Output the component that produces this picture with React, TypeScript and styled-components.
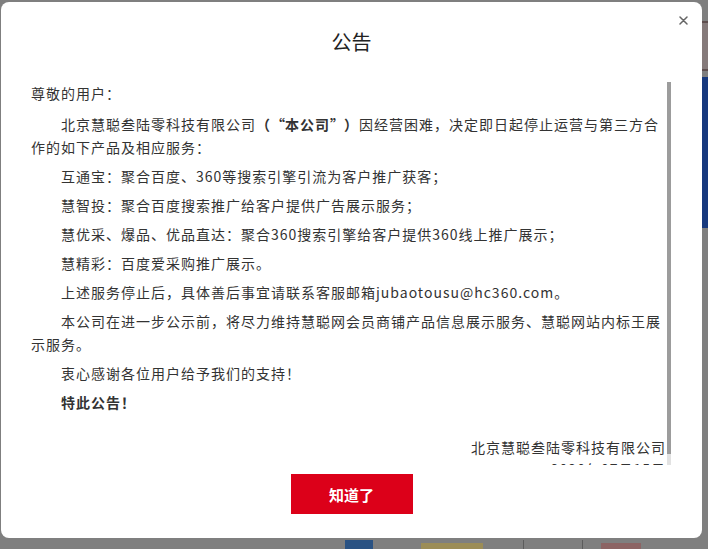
import React from 'react'
import styled, { createGlobalStyle } from 'styled-components'

const GlobalStyle = createGlobalStyle`
  html, body {
    margin: 0;
    padding: 0;
    width: 100%;
    height: 100%;
    overflow: hidden;
  }
  body {
    font-family: "Noto Sans CJK SC", "Noto Sans", sans-serif;
    color: #333;
  }
`

const Page = styled.div`
  position: relative;
  width: 100vw;
  height: 100vh;
  background: #7f7f7f;
  overflow: hidden;
`

/* dimmed page content peeking out behind the overlay */
const RightStrip = styled.div`
  position: absolute;
  top: 0;
  right: 0;
  width: 6px;
  display: flex;
  flex-direction: column;
  padding-top: 21px;
`

const Band = styled.div<{ $h: number; $bg: string; $gap?: number }>`
  height: ${({ $h }) => $h}px;
  margin-bottom: ${({ $gap = 0 }) => $gap}px;
  background: ${({ $bg }) => $bg};
`

const BottomStrip = styled.div`
  position: absolute;
  left: 0;
  right: 0;
  bottom: 0;
  height: 9px;
  display: flex;
  align-items: flex-end;
  padding-left: 345px;
  gap: 0;
`

const Piece = styled.div<{ $w: number; $h: number; $bg: string; $ml?: number }>`
  width: ${({ $w }) => $w}px;
  height: ${({ $h }) => $h}px;
  margin-left: ${({ $ml = 0 }) => $ml}px;
  background: ${({ $bg }) => $bg};
`

const Dialog = styled.div`
  position: absolute;
  top: 2px;
  left: 1px;
  width: 701px;
  height: 536px;
  background: #fff;
  border-radius: 8px;
  display: flex;
  flex-direction: column;
  align-items: stretch;
`

const Close = styled.button`
  position: absolute;
  top: 11px;
  right: 12px;
  width: 14px;
  height: 14px;
  padding: 0;
  border: 0;
  background: none;
  cursor: pointer;
  display: flex;
  align-items: center;
  justify-content: center;
`

const Title = styled.h2`
  margin: 26px 0 0;
  font-size: 20px;
  line-height: 28px;
  font-weight: normal;
  text-align: center;
  color: #222;
`

const Body = styled.div`
  margin: 26px 0 0 30px;
  width: 640px;
  height: 383px;
  display: flex;
  align-items: stretch;
`

const Content = styled.div`
  flex: 1;
  min-width: 0;
  padding-right: 1px;
  overflow: hidden;
  font-size: 14px;
  letter-spacing: 1px;
  line-height: 23px;
  color: #333;
`

const ScrollTrack = styled.div`
  width: 4px;
  background: #e2e2e2;
  display: flex;
  flex-direction: column;
`

const ScrollThumb = styled.div`
  background: #9c9c9c;
`

const Greeting = styled.p`
  margin: 0 0 8px;
`

const Para = styled.p`
  margin: 0 0 6px;
  text-indent: 30px;
`

const Strong = styled.b`
  font-weight: bold;
`

const Quote = styled.span<{ $side: 'open' | 'close' }>`
  display: inline-block;
  width: 14px;
  text-indent: 0;
  text-align: ${({ $side }) => ($side === 'open' ? 'right' : 'left')};
`

const Signature = styled.div`
  margin-top: 22px;
  text-align: right;
  line-height: 22px;
`

const Footer = styled.div`
  display: flex;
  justify-content: center;
  padding-top: 9px;
`

const ConfirmButton = styled.button`
  width: 122px;
  height: 40px;
  border: 0;
  background: #dc0019;
  color: #fff;
  font-family: "Noto Sans CJK SC", sans-serif;
  font-size: 15px;
  font-weight: bold;
  cursor: pointer;
`

const App: React.FC = () => {
  const scrollRatio = 0.972

  return (
    <Page>
      <GlobalStyle />
      <RightStrip>
        <Band $h={2} $bg="#5e4e4e" />
        <Band $h={46} $bg="#857a7a" />
        <Band $h={2} $bg="#5e4e4e" $gap={6} />
        <Band $h={151} $bg="#17397e" />
      </RightStrip>
      <BottomStrip>
        <Piece $w={28} $h={9} $bg="#2a5283" />
        <Piece $w={62} $h={6} $bg="#9c8d57" $ml={48} />
        <Piece $w={1} $h={9} $bg="#5c5c5c" $ml={40} />
        <Piece $w={1} $h={9} $bg="#5c5c5c" $ml={58} />
        <Piece $w={40} $h={6} $bg="#8c6464" $ml={18} />
      </BottomStrip>

      <Dialog>
        <Close aria-label="关闭">
          <svg width="9" height="9" viewBox="0 0 9 9">
            <path d="M1 1L8 8M8 1L1 8" stroke="#666" strokeWidth="1.5" strokeLinecap="round" />
          </svg>
        </Close>
        <Title>公告</Title>
        <Body>
          <Content>
            <Greeting>尊敬的用户：</Greeting>
            <Para>
              北京慧聪叁陆零科技有限公司
              <Strong>
                （<Quote $side="open">“</Quote>本公司<Quote $side="close">”</Quote>）
              </Strong>
              因经营困难，决定即日起停止运营与第三方合作的如下产品及相应服务：
            </Para>
            <Para>互通宝：聚合百度、360等搜索引擎引流为客户推广获客；</Para>
            <Para>慧智投：聚合百度搜索推广给客户提供广告展示服务；</Para>
            <Para>慧优采、爆品、优品直达：聚合360搜索引擎给客户提供360线上推广展示；</Para>
            <Para>慧精彩：百度爱采购推广展示。</Para>
            <Para>上述服务停止后，具体善后事宜请联系客服邮箱jubaotousu@hc360.com。</Para>
            <Para>本公司在进一步公示前，将尽力维持慧聪网会员商铺产品信息展示服务、慧聪网站内标王展示服务。</Para>
            <Para>衷心感谢各位用户给予我们的支持！</Para>
            <Para>
              <Strong>特此公告！</Strong>
            </Para>
            <Signature>
              北京慧聪叁陆零科技有限公司
              <br />
              2020年07月15日
            </Signature>
          </Content>
          <ScrollTrack>
            <ScrollThumb style={{ height: `${scrollRatio * 100}%` }} />
          </ScrollTrack>
        </Body>
        <Footer>
          <ConfirmButton>知道了</ConfirmButton>
        </Footer>
      </Dialog>
    </Page>
  )
}

export default App
